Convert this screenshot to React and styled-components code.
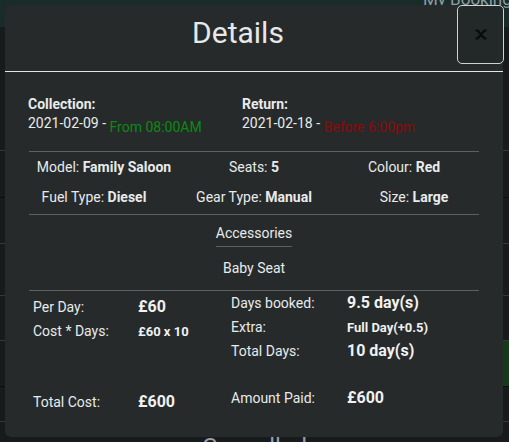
import React from 'react';
import styled, { createGlobalStyle } from 'styled-components';

const GlobalStyle = createGlobalStyle`
  body {
    margin: 0;
    background: #181b1c;
    font-family: Roboto, "Liberation Sans", sans-serif;
  }
`;

const Page = styled.div`
  position: relative;
  width: 509px;
  height: 442px;
  overflow: hidden;
`;

const NavBar = styled.div`
  display: flex;
  height: 27px;
  background: #1a2c2a;
  overflow: hidden;
`;

const NavTitle = styled.div`
  margin: -11px 0 0 423px;
  font-size: 17px;
  line-height: 20px;
  color: #8d9ea1;
  white-space: nowrap;
`;

const BgRow = styled.div`
  display: flex;
  justify-content: flex-end;
  height: ${(p) => p.$h}px;
  border-bottom: 1px solid ${(p) => p.$line || '#34383a'};
`;

const BgStatus = styled.div`
  width: 60px;
  background: #123d17;
`;

const BgCaption = styled.div`
  flex: 1;
  padding-top: 11px;
  text-align: center;
  font-size: 24px;
  color: #9aa0a3;
`;

const Modal = styled.div`
  position: absolute;
  top: 5px;
  left: 5px;
  width: 498px;
  height: 432px;
  background: #262a2b;
  border-radius: 6px;
  color: #e8eaeb;
`;

const Header = styled.div`
  display: flex;
  align-items: flex-start;
  height: 66px;
  border-bottom: 1px solid #e2e4e6;
`;

const Title = styled.h1`
  flex: 1;
  margin: 0;
  padding: 13px 0 0 14px;
  text-align: center;
  font-size: 30px;
  font-weight: 400;
  line-height: 30px;
  color: #e6e8e9;
`;

const CloseButton = styled.button`
  display: flex;
  align-items: center;
  justify-content: center;
  width: 47px;
  height: 59px;
  margin-right: -1px;
  padding: 0;
  background: #232829;
  border: 1px solid #cfd1d2;
  border-radius: 5px;
`;

const Body = styled.div`
  padding: 23px 24px 0;
`;

const TimeGrid = styled.div`
  display: grid;
  grid-template-columns: 214px 1fr;
  margin: 0 0 14px -1px;
  font-size: 14px;
  line-height: 19px;
`;

const TimeLabel = styled.div`
  font-weight: 700;
`;

const Note = styled.span`
  vertical-align: -4px;
  color: ${(p) => p.$color};
`;

const Divider = styled.hr`
  margin: ${(p) => p.$mt || 0}px 0 0;
  border: 0;
  border-top: 1px solid #5d6163;
`;

const SpecRow = styled.div`
  display: grid;
  grid-template-columns: repeat(3, 1fr);
  margin: 0 ${(p) => (p.$wide ? '-15px' : '0')};
  font-size: 14px;
  line-height: 30px;
  text-align: center;
`;

const Accessories = styled.div`
  margin-top: 8px;
  text-align: center;
  font-size: 14px;
  line-height: 20px;
`;

const AccTitle = styled.div`
  display: inline-block;
  padding-bottom: 3px;
  border-bottom: 1px solid #5d6163;
`;

const AccItem = styled.div`
  margin-top: 11px;
`;

const Prices = styled.div`
  display: grid;
  grid-template-columns: 202px 1fr;
`;

const PriceCol = styled.div`
  display: flex;
  flex-direction: column;
  padding: ${(p) => p.$top}px 0 0 ${(p) => p.$left}px;
`;

const PriceList = styled.div`
  height: 95px;
`;

const PriceRow = styled.div`
  display: flex;
  align-items: baseline;
  height: 24px;
`;

const PriceLabel = styled.div`
  flex-shrink: 0;
  width: ${(p) => p.$w}px;
  font-size: 14px;
  line-height: 24px;
`;

const PriceValue = styled.div`
  font-size: ${(p) => p.$size}px;
  font-weight: 700;
  line-height: 24px;
  color: #f0f1f2;
`;

function CloseIcon() {
  return (
    <svg width="12" height="11" viewBox="0 0 12 11">
      <path
        d="M2.5 1.5 L9.5 9.5 M9.5 1.5 L2.5 9.5 M0.5 1.5 H3.5 M8.5 1.5 H11.5 M0.5 9.5 H3.5 M8.5 9.5 H11.5"
        stroke="#0a0b0b"
        strokeWidth="2.2"
        fill="none"
      />
    </svg>
  );
}

function Price({ label, value, w, size }) {
  return (
    <PriceRow>
      <PriceLabel $w={w}>{label}</PriceLabel>
      <PriceValue $size={size}>{value}</PriceValue>
    </PriceRow>
  );
}

export default function App() {
  return (
    <Page>
      <GlobalStyle />
      <NavBar>
        <NavTitle>My Bookings</NavTitle>
      </NavBar>
      <BgRow $h={123} />
      <BgRow $h={46} $line="#0c0d0d" />
      <BgRow $h={45} />
      <BgRow $h={51} />
      <BgRow $h={44} />
      <BgRow $h={45} $line="#0c0d0d">
        <BgStatus />
      </BgRow>
      <BgRow $h={34} />
      <BgRow $h={40}>
        <BgCaption>Cancelled</BgCaption>
      </BgRow>

      <Modal>
        <Header>
          <Title>Details</Title>
          <CloseButton aria-label="Close">
            <CloseIcon />
          </CloseButton>
        </Header>
        <Body>
          <TimeGrid>
            <div>
              <TimeLabel>Collection:</TimeLabel>
              <div>
                2021-02-09 - <Note $color="#0b8a10">From 08:00AM</Note>
              </div>
            </div>
            <div>
              <TimeLabel>Return:</TimeLabel>
              <div>
                2021-02-18 - <Note $color="#8b0a0a">Before 6:00pm</Note>
              </div>
            </div>
          </TimeGrid>

          <Divider />
          <SpecRow>
            <div>Model: <b>Family Saloon</b></div>
            <div>Seats: <b>5</b></div>
            <div>Colour: <b>Red</b></div>
          </SpecRow>
          <SpecRow $wide>
            <div>Fuel Type: <b>Diesel</b></div>
            <div>Gear Type: <b>Manual</b></div>
            <div>Size: <b>Large</b></div>
          </SpecRow>
          <Divider $mt={2} />

          <Accessories>
            <AccTitle>Accessories</AccTitle>
            <AccItem>Baby Seat</AccItem>
          </Accessories>
          <Divider $mt={12} />

          <Prices>
            <PriceCol $top={4} $left={4}>
              <PriceList>
                <Price label="Per Day:" value="£60" w={105} size={16} />
                <Price label="Cost * Days:" value="£60 x 10" w={105} size={13} />
              </PriceList>
              <Price label="Total Cost:" value="£600" w={105} size={16} />
            </PriceCol>
            <PriceCol $top={0} $left={0}>
              <PriceList>
                <Price label="Days booked:" value="9.5 day(s)" w={116} size={16} />
                <Price label="Extra:" value="Full Day(+0.5)" w={116} size={13} />
                <Price label="Total Days:" value="10 day(s)" w={116} size={16} />
              </PriceList>
              <Price label="Amount Paid:" value="£600" w={116} size={16} />
            </PriceCol>
          </Prices>
        </Body>
      </Modal>
    </Page>
  );
}
